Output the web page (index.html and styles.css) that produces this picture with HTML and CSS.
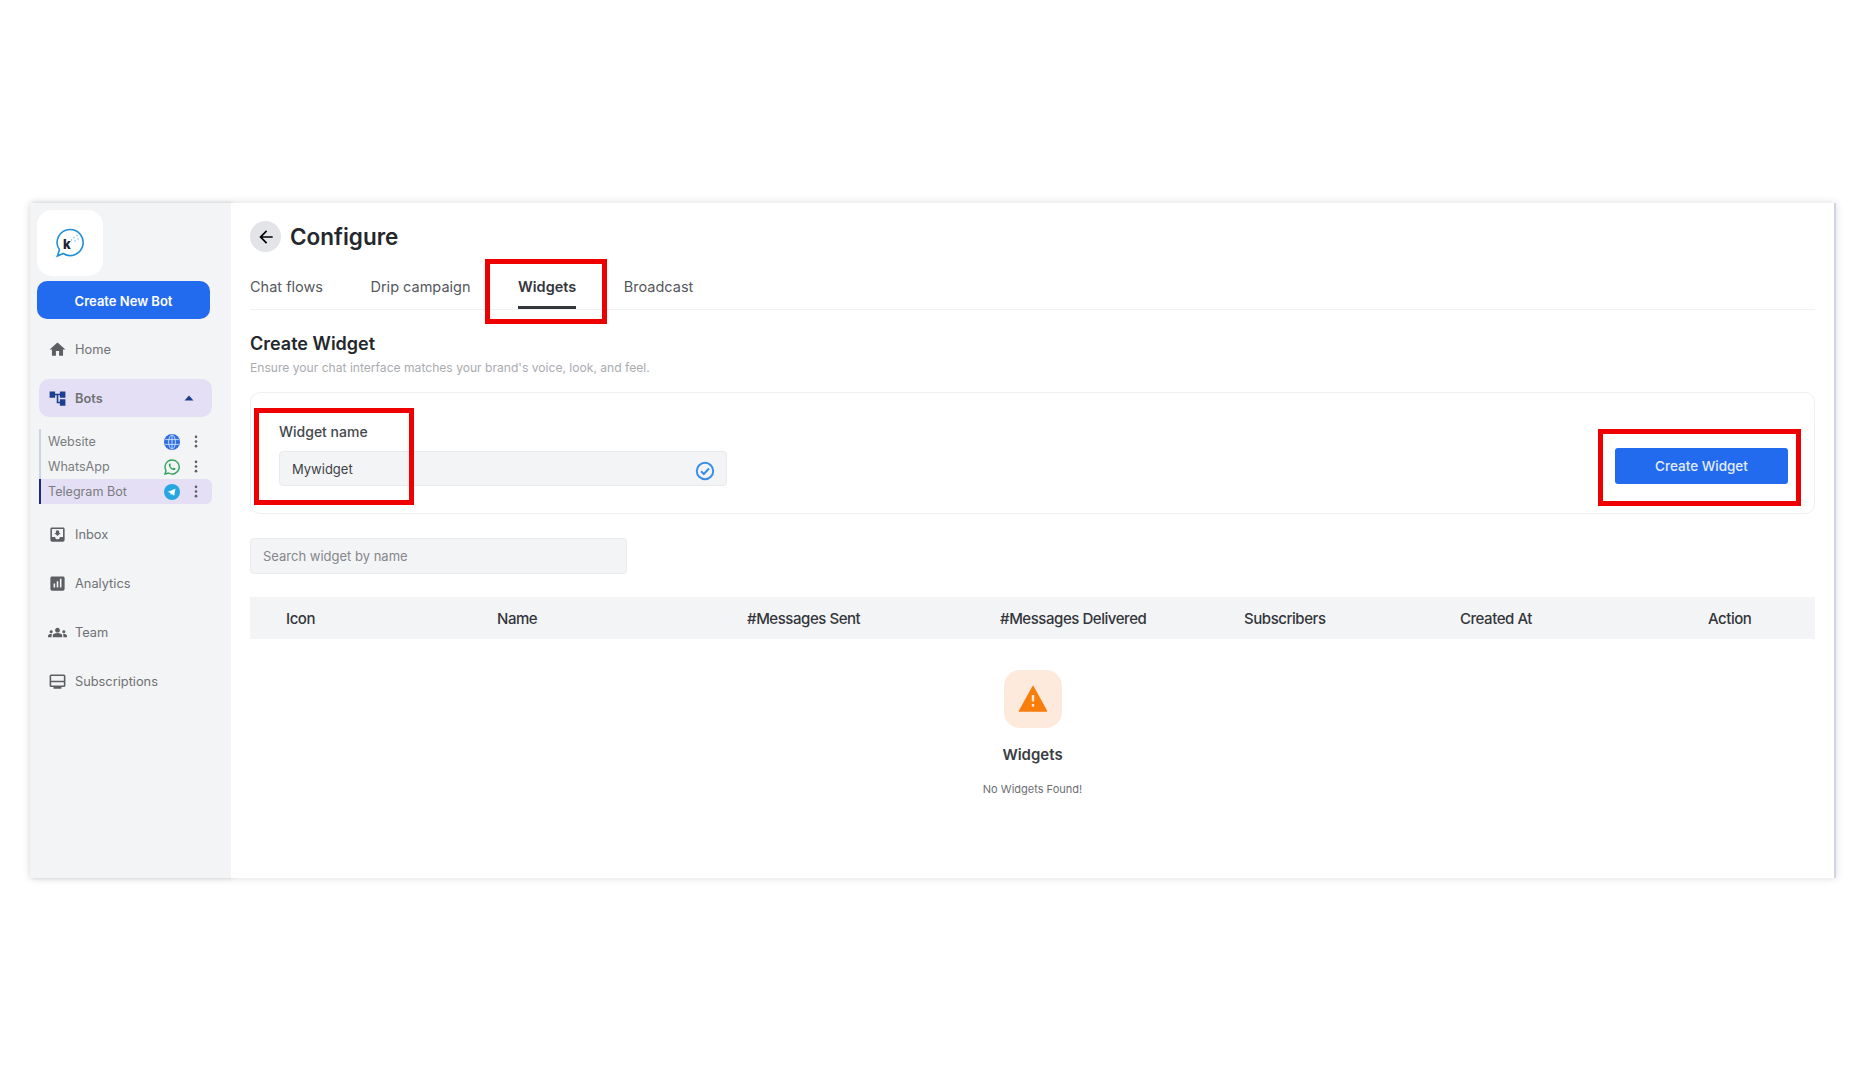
FILE: index.html
```html
<html lang="en">
<head>
    <meta charset="UTF-8">
    <meta name="viewport" content="width=device-width, initial-scale=1.0">
    <title>Configure</title>
    <link rel="stylesheet" href="styles.css">
</head>
<body>
    <div class="frame">
        <aside class="sidebar">
            <div class="logo">
                <svg width="32" height="32" viewBox="0 0 32 32">
                    <path d="M16 2.500a13 13 0 1 1-6.800 24L3.400 29l2-6.200A13 13 0 0 1 16 2.500z" fill="none" stroke="#1f8fd6" stroke-width="1.600"/>
                    <circle cx="17.500" cy="13" r="0.700" fill="#5fb4e6"/>
                    <circle cx="20" cy="10.500" r="0.700" fill="#5fb4e6"/>
                    <circle cx="23" cy="8.500" r="0.700" fill="#5fb4e6"/>
                    <circle cx="21" cy="14" r="0.700" fill="#5fb4e6"/>
                    <circle cx="24" cy="12" r="0.700" fill="#5fb4e6"/>
                    <text x="9" y="22" class="logo-k">k</text>
                </svg>
            </div>
            <div class="new-bot">Create New Bot</div>
            <div class="nav-item nav-home">
                <svg class="nav-icon" viewBox="0 0 24 24"><path d="M10 20v-6h4v6h5v-8h3L12 3 2 12h3v8z"/></svg>
                <span>Home</span>
            </div>
            <div class="nav-item nav-bots">
                <svg class="nav-icon navy" viewBox="0 0 24 24"><path d="M22 11V3h-7v3H9V3H2v8h7V8h2v10h4v3h7v-8h-7v3h-2V8h2v3z"/></svg>
                <span>Bots</span>
                <svg class="caret" width="10" height="6" viewBox="0 0 10 6"><path d="M5 .5L9.500 5.500H.5z"/></svg>
            </div>
            <div class="bot-list">
                <div class="bot-row">
                    <span class="bot-name">Website</span>
                    <svg class="bot-icon" viewBox="0 0 16 16">
                        <circle cx="8" cy="8" r="8" fill="#2f6fe4"/>
                        <g fill="none" stroke="#cfe0fb" stroke-width="0.900">
                            <ellipse cx="8" cy="8" rx="3.400" ry="7"/>
                            <path d="M8 1v14M1.200 5.600h13.600M1.200 10.400h13.600"/>
                        </g>
                    </svg>
                    <svg class="dots" viewBox="0 0 4 14"><circle cx="2" cy="2" r="1.400"/><circle cx="2" cy="7" r="1.400"/><circle cx="2" cy="12" r="1.400"/></svg>
                </div>
                <div class="bot-row">
                    <span class="bot-name">WhatsApp</span>
                    <svg class="bot-icon" viewBox="0 0 16 16">
                        <path d="M8 1a7 7 0 0 0-6 10.500L1 15l3.600-1A7 7 0 1 0 8 1z" fill="none" stroke="#2fa35a" stroke-width="1.400"/>
                        <path d="M5.600 4.400c-.9.6-1 1.800-.4 3 .7 1.500 2.200 3.100 3.900 3.700 1.200.4 2.100 0 2.500-1 .1-.3 0-.5-.2-.6l-1.400-.7c-.2-.1-.4 0-.5.1l-.6.7c-1.200-.4-2.100-1.300-2.700-2.500l.5-.6c.1-.2.2-.4.1-.6L6.300 4.600c-.1-.3-.4-.4-.7-.2z" fill="#2fa35a"/>
                    </svg>
                    <svg class="dots" viewBox="0 0 4 14"><circle cx="2" cy="2" r="1.400"/><circle cx="2" cy="7" r="1.400"/><circle cx="2" cy="12" r="1.400"/></svg>
                </div>
                <div class="bot-row bot-active">
                    <span class="bot-name">Telegram Bot</span>
                    <svg class="bot-icon" viewBox="0 0 16 16">
                        <circle cx="8" cy="8" r="8" fill="#27a7e0"/>
                        <path d="M3.600 8l7.800-3.200-1.200 7-2.400-1.900-1.100 1.100-.3-2.200z" fill="#fff"/>
                    </svg>
                    <svg class="dots" viewBox="0 0 4 14"><circle cx="2" cy="2" r="1.400"/><circle cx="2" cy="7" r="1.400"/><circle cx="2" cy="12" r="1.400"/></svg>
                </div>
            </div>
            <div class="nav-item">
                <svg class="nav-icon" viewBox="0 0 24 24"><path d="M19 3H4.990c-1.110 0-1.980.89-1.980 2L3 19c0 1.100.88 2 1.990 2H19c1.100 0 2-.9 2-2V5c0-1.110-.9-2-2-2zm0 12h-4c0 1.660-1.350 3-3 3s-3-1.340-3-3H4.990V5H19v10zm-3-5h-2V7h-4v3H8l4 4 4-4z"/></svg>
                <span>Inbox</span>
            </div>
            <div class="nav-item">
                <svg class="nav-icon" viewBox="0 0 24 24"><path d="M19 3H5c-1.100 0-2 .9-2 2v14c0 1.100.9 2 2 2h14c1.100 0 2-.9 2-2V5c0-1.100-.9-2-2-2zM9 17H7v-5h2v5zm4 0h-2v-8h2v8zm4 0h-2v-11h2v11z"/></svg>
                <span>Analytics</span>
            </div>
            <div class="nav-item">
                <svg class="nav-icon" viewBox="0 0 24 24"><path d="M12 12.750c1.630 0 3.070.39 4.240.9 1.080.48 1.760 1.560 1.760 2.730V18H6v-1.610c0-1.180.68-2.260 1.760-2.730 1.170-.52 2.610-.91 4.240-.91zM4 13c1.100 0 2-.9 2-2s-.9-2-2-2-2 .9-2 2 .9 2 2 2zm1.130 1.100c-.37-.06-.74-.1-1.130-.1-.99 0-1.930.21-2.780.58C.48 14.900 0 15.620 0 16.430V18h4.500v-1.610c0-.83.23-1.610.63-2.290zM20 13c1.100 0 2-.9 2-2s-.9-2-2-2-2 .9-2 2 .9 2 2 2zm4 3.430c0-.81-.48-1.530-1.220-1.850-.85-.37-1.790-.58-2.780-.58-.39 0-.76.04-1.130.1.4.68.63 1.460.63 2.290V18H24v-1.570zM12 6c1.660 0 3 1.340 3 3s-1.340 3-3 3-3-1.340-3-3 1.340-3 3-3z"/></svg>
                <span>Team</span>
            </div>
            <div class="nav-item">
                <svg class="nav-icon" viewBox="0 0 24 24"><path d="M4 3h16a2 2 0 0 1 2 2v12a2 2 0 0 1-2 2h-3v2H7v-2H4a2 2 0 0 1-2-2V5a2 2 0 0 1 2-2zm0 2v6h16V5H4zm0 8v4h16v-4H4z"/></svg>
                <span>Subscriptions</span>
            </div>
        </aside>

        <main class="content">
            <div class="title-row">
                <div class="back">
                    <svg width="20" height="20" viewBox="0 0 24 24"><path d="M20 11H7.800l5.600-5.600L12 4l-8 8 8 8 1.400-1.400L7.800 13H20z"/></svg>
                </div>
                <h1>Configure</h1>
            </div>

            <div class="tabs">
                <div class="tab">Chat flows</div>
                <div class="tab">Drip campaign</div>
                <div class="tab tab-active">Widgets<div class="mark mark-tab"></div></div>
                <div class="tab">Broadcast</div>
            </div>

            <h2>Create Widget</h2>
            <p class="hint">Ensure your chat interface matches your brand's voice, look, and feel.</p>

            <div class="card">
                <div class="field">
                    <label>Widget name</label>
                    <div class="input-wrap">
                        <input class="input" value="Mywidget">
                        <svg class="check" width="20" height="20" viewBox="0 0 20 20">
                            <circle cx="10" cy="10" r="8.200" fill="none" stroke="#3b8ee6" stroke-width="2"/>
                            <path d="M6 10.300l2.800 2.700L14 7.500" fill="none" stroke="#3b8ee6" stroke-width="2"/>
                        </svg>
                    </div>
                    <div class="mark mark-field"></div>
                </div>
                <div class="btn-wrap">
                    <div class="btn-create">Create Widget</div>
                    <div class="mark mark-btn"></div>
                </div>
            </div>

            <input class="input search" placeholder="Search widget by name">

            <div class="table-head">
                <div>Icon</div>
                <div>Name</div>
                <div>#Messages Sent</div>
                <div>#Messages Delivered</div>
                <div>Subscribers</div>
                <div>Created At</div>
                <div>Action</div>
            </div>

            <div class="empty">
                <div class="empty-icon">
                    <svg width="30" height="28" viewBox="0 0 30 28">
                        <path d="M15 1.500L28.500 26H1.500z" fill="#f97d0b" stroke="#f97d0b" stroke-width="1.500" stroke-linejoin="round"/>
                        <rect x="13.800" y="10" width="2.400" height="6.500" fill="#fdeadd"/>
                        <rect x="13.800" y="19" width="2.400" height="2.600" fill="#fdeadd"/>
                    </svg>
                </div>
                <div class="empty-title">Widgets</div>
                <div class="empty-text">No Widgets Found!</div>
            </div>
        </main>
    </div>
</body>
</html>
```

FILE: styles.css
```css
body {
    margin: 0;
    background-color: #fff;
    font-family: Inter, "Liberation Sans", sans-serif;
    color: #24272c;
}

.frame {
    display: flex;
    width: 1806px;
    height: 675px;
    margin: 203px 0 0 30px;
    border-right: 2px solid #cfd5e3;
    box-shadow: 0 0 8px rgba(0, 0, 0, 0.14);
    box-sizing: border-box;
}

.sidebar {
    width: 201px;
    flex-shrink: 0;
    padding: 7px 0 0 7px;
    box-sizing: border-box;
    background-color: #f3f4f6;
    box-shadow: 2px 0 5px rgba(0, 0, 0, 0.12);
}

.logo {
    display: flex;
    justify-content: center;
    align-items: center;
    width: 66px;
    height: 66px;
    border-radius: 15px;
    background-color: #fff;
}

.logo-k {
    font-size: 13px;
    font-weight: 800;
    fill: #1c2233;
}

.new-bot {
    width: 173px;
    height: 38px;
    margin-top: 5px;
    border-radius: 10px;
    background-color: #226bef;
    color: #fff;
    font-size: 13px;
    font-weight: 600;
    line-height: 40px;
    text-align: center;
}

.nav-item {
    display: flex;
    align-items: center;
    height: 38px;
    margin: 11px 0 0 2px;
    padding-left: 9px;
    color: #6f7175;
    font-size: 12.800px;
}

.nav-item span {
    margin: 1px 0 0 8px;
}

.nav-icon {
    width: 19px;
    height: 19px;
    flex-shrink: 0;
    fill: #5c5e62;
}

.nav-icon.navy {
    fill: #1e3f8f;
}

.nav-home {
    margin-top: 11px;
}

.nav-bots {
    width: 173px;
    box-sizing: border-box;
    margin-top: 11px;
    border-radius: 10px;
    background-color: #e4dff4;
    font-weight: 600;
}

.caret {
    margin-left: auto;
    margin-right: 18px;
    fill: #1e3f8f;
}

.bot-list {
    width: 173px;
    margin: 12px 0 11px 2px;
    border-left: 2px solid #cdd3e4;
    box-sizing: border-box;
}

.bot-row {
    display: flex;
    align-items: center;
    height: 25px;
    padding-left: 7px;
    color: #7a7c80;
    font-size: 12.600px;
}

.bot-active {
    margin-left: -2px;
    border-left: 2px solid #1a2a7c;
    border-radius: 0 6px 6px 0;
    background-color: #e4dff4;
}

.bot-name {
    flex: 1;
}

.bot-icon {
    width: 16px;
    height: 16px;
}

.dots {
    width: 4px;
    height: 13px;
    margin: 0 14px 0 14px;
    fill: #5c5e62;
}

.content {
    flex: 1;
    position: relative;
    padding: 18px 19px 0 19px;
    background-color: #fff;
}

.title-row {
    display: flex;
    align-items: center;
    gap: 9px;
}

.back {
    display: flex;
    justify-content: center;
    align-items: center;
    width: 31px;
    height: 31px;
    border-radius: 50%;
    background-color: #e3e4e8;
}

h1 {
    margin: 0;
    font-size: 22.500px;
    font-weight: 600;
}

.tabs {
    display: flex;
    gap: 47.500px;
    height: 47px;
    margin-top: 11px;
    border-bottom: 1px solid #f0f1f3;
    box-sizing: border-box;
}

.tab {
    position: relative;
    padding-top: 15px;
    color: #55585d;
    font-size: 14.500px;
}

.tab-active {
    color: #33363b;
    font-weight: 600;
    border-bottom: 3px solid #33363b;
    height: 46px;
    box-sizing: border-box;
}

.mark {
    position: absolute;
    border: 5px solid #ee0000;
    box-sizing: border-box;
}

.mark-tab {
    left: -33px;
    top: -4px;
    width: 122px;
    height: 65px;
}

h2 {
    margin: 22px 0 0;
    font-size: 18px;
    font-weight: 600;
    line-height: 24px;
}

.hint {
    margin: 4px 0 0;
    color: #a9abb0;
    font-size: 12.100px;
    line-height: 16px;
}

.card {
    display: flex;
    justify-content: space-between;
    align-items: flex-start;
    height: 122px;
    margin-top: 16px;
    padding: 29px 26px 0 28px;
    border: 1.500px solid #eeeff1;
    border-radius: 10px;
    box-sizing: border-box;
}

.field {
    position: relative;
}

.field label {
    display: block;
    color: #44474c;
    font-size: 14px;
    font-weight: 500;
    line-height: 20px;
}

.input-wrap {
    position: relative;
    margin-top: 9px;
}

.input {
    display: block;
    width: 448px;
    height: 35px;
    padding: 0 12px;
    border: 1px solid #e9eaed;
    border-radius: 4px;
    box-sizing: border-box;
    background-color: #f3f4f6;
    color: #3f4247;
    font-family: Inter, "Liberation Sans", sans-serif;
    font-size: 13px;
}

.check {
    position: absolute;
    right: 12px;
    top: 10px;
}

.mark-field {
    left: -25px;
    top: -14px;
    width: 160px;
    height: 97px;
}

.btn-wrap {
    position: relative;
    margin-top: 26px;
}

.btn-create {
    width: 173px;
    height: 36px;
    border-radius: 3px;
    background-color: #226bef;
    color: #e4edfd;
    font-size: 13.500px;
    font-weight: 500;
    line-height: 37px;
    text-align: center;
}

.mark-btn {
    left: -17px;
    top: -19px;
    width: 203px;
    height: 77px;
}

.search {
    width: 377px;
    height: 36px;
    margin-top: 24px;
}

.search::placeholder {
    color: #85878c;
}

.table-head {
    display: grid;
    grid-template-columns: 211px 250px 253px 244px 216px 248px 1fr;
    align-items: center;
    height: 42px;
    margin-top: 23px;
    padding-left: 36px;
    background-color: #f3f4f6;
    color: #33363b;
    font-size: 15px;
    font-weight: 500;
    letter-spacing: -0.450px;
}

.empty {
    display: flex;
    flex-direction: column;
    align-items: center;
    padding-top: 31px;
}

.empty-icon {
    display: flex;
    justify-content: center;
    align-items: center;
    width: 58px;
    height: 58px;
    border-radius: 16px;
    background-color: #fdeadd;
}

.empty-title {
    margin-top: 17px;
    color: #3a3d42;
    font-size: 15px;
    font-weight: 600;
    line-height: 20px;
}

.empty-text {
    margin-top: 17px;
    color: #6d6f74;
    font-size: 11px;
    line-height: 14px;
}
```
